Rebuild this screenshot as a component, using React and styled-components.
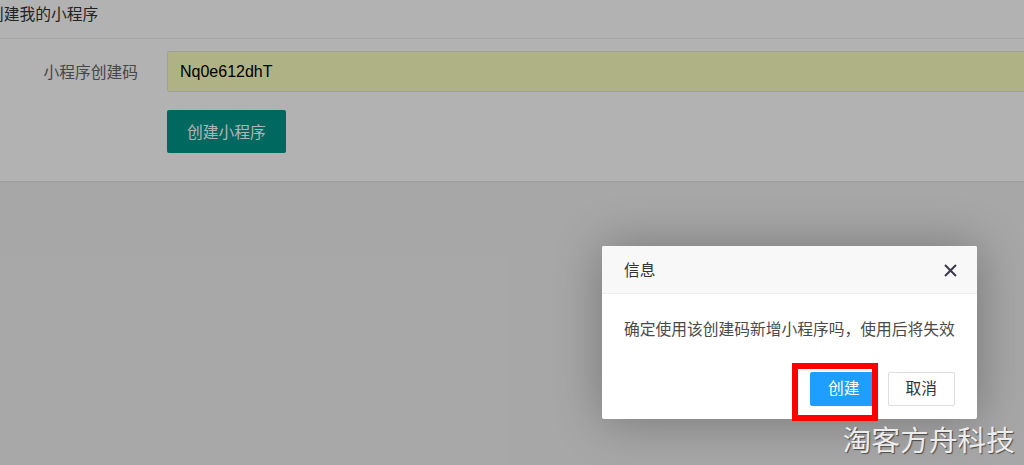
import React from 'react'
import styled, { createGlobalStyle } from 'styled-components'

const GlobalStyle = createGlobalStyle`
  html, body {
    margin: 0;
    padding: 0;
    background: #f0f0f0;
    overflow: hidden;
    font-family: "Liberation Sans", "Noto Sans CJK SC", sans-serif;
  }
  #root {
    height: 465px;
  }
`

const Page = styled.div`
  position: relative;
  height: 465px;
  overflow: hidden;
`

const Card = styled.div`
  margin-left: -27px;
  width: 1200px;
  background: #fff;
  box-shadow: 0 1px 2px rgba(0, 0, 0, 0.08);
`

const CardHeader = styled.div`
  height: 38px;
  padding: 0 15px;
  line-height: 29px;
  font-size: 15.75px;
  color: #333;
  border-bottom: 1px solid #f0f0f0;
`

const CardBody = styled.div`
  padding: 12px 0 28px;
`

const FormRow = styled.div`
  display: flex;
  align-items: center;
  margin-bottom: ${p => p.gap || 0}px;
`

const Label = styled.label`
  width: 165px;
  text-align: right;
  font-size: 15.75px;
  color: #666;
  flex-shrink: 0;
`

const Input = styled.div`
  margin-left: 29px;
  width: 1000px;
  height: 39px;
  border: 1px solid #e6e6e6;
  background: #faffbd;
  border-radius: 2px;
  padding-left: 12px;
  font-size: 16px;
  line-height: 39px;
  color: #000;
`

const GreenButton = styled.button`
  margin-left: 194px;
  height: 43px;
  padding: 0 20px;
  border: none;
  border-radius: 2px;
  background: #009688;
  color: #fff;
  font-family: inherit;
  font-size: 15.75px;
`

const Shade = styled.div`
  position: absolute;
  inset: 0;
  background: rgba(0, 0, 0, 0.3);
`

const Dialog = styled.div`
  position: absolute;
  left: 602px;
  top: 246px;
  width: 375px;
  height: 173px;
  background: #fff;
  border-radius: 2px;
  box-shadow: 1px 1px 50px rgba(0, 0, 0, 0.3);
  display: flex;
  flex-direction: column;
`

const DialogTitle = styled.div`
  height: 47px;
  padding: 0 20px 0 22px;
  background: #f8f8f8;
  border-bottom: 1px solid #eee;
  border-radius: 2px 2px 0 0;
  display: flex;
  align-items: center;
  justify-content: space-between;
  font-size: 15.75px;
  color: #333;
`

const CloseIcon = styled.svg`
  width: 13px;
  height: 13px;
  margin-top: 1px;
`

const DialogContent = styled.div`
  padding: 22px 22px 0;
  line-height: 27px;
  font-size: 15.75px;
  color: #4a4a4a;
  height: 56px;
`

const ButtonBar = styled.div`
  display: flex;
  justify-content: flex-end;
  gap: 10px;
  padding: 0 22px 13px;
`

const DialogButton = styled.button`
  height: 34px;
  padding: 0 17px;
  border: 1px solid ${p => (p.primary ? '#1e9fff' : '#dedede')};
  background: ${p => (p.primary ? '#1e9fff' : '#fff')};
  color: ${p => (p.primary ? '#fff' : '#333')};
  border-radius: 2px;
  font-family: inherit;
  font-size: 15.75px;
  line-height: 32px;
`

const Highlight = styled.div`
  position: absolute;
  left: 792px;
  top: 363px;
  width: 74px;
  height: 46px;
  border: 6px solid #ff0000;
`

const Watermark = styled.div`
  position: absolute;
  right: 9px;
  bottom: 6px;
  font-size: 28.5px;
  letter-spacing: 0.2px;
  color: #ececec;
  text-shadow: 1px 1px 1px rgba(0, 0, 0, 0.55);
  font-family: "Noto Sans CJK SC", sans-serif;
`

export default function App() {
  return (
    <Page>
      <GlobalStyle />
      <Card>
        <CardHeader>创建我的小程序</CardHeader>
        <CardBody>
          <FormRow gap={18}>
            <Label>小程序创建码</Label>
            <Input>Nq0e612dhT</Input>
          </FormRow>
          <FormRow>
            <GreenButton>创建小程序</GreenButton>
          </FormRow>
        </CardBody>
      </Card>
      <Shade />
      <Dialog>
        <DialogTitle>
          <span>信息</span>
          <CloseIcon viewBox="0 0 13 13">
            <path d="M1 1 L12 12 M12 1 L1 12" stroke="#3a3a4a" strokeWidth="2" />
          </CloseIcon>
        </DialogTitle>
        <DialogContent>确定使用该创建码新增小程序吗，使用后将失效</DialogContent>
        <ButtonBar>
          <DialogButton primary>创建</DialogButton>
          <DialogButton>取消</DialogButton>
        </ButtonBar>
      </Dialog>
      <Highlight />
      <Watermark>淘客方舟科技</Watermark>
    </Page>
  )
}
